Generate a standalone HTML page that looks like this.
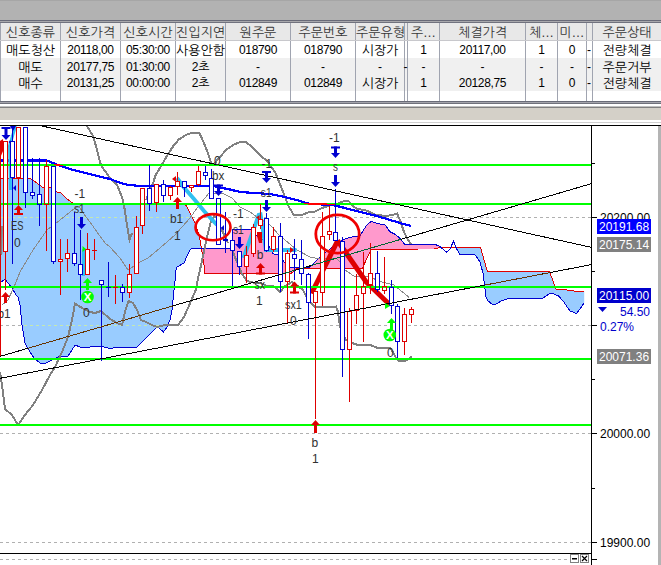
<!DOCTYPE html><html><head><meta charset="utf-8"><title>chart</title><style>
html,body{margin:0;padding:0;background:#fff}
body{width:661px;height:565px;position:relative;overflow:hidden;font-family:"Liberation Sans","NanumGothic","Noto Sans CJK KR",sans-serif;font-size:12px}
.a{position:absolute}
.c{position:absolute;text-align:center;white-space:nowrap;overflow:hidden;line-height:17px;height:17px;color:#000}
.h{color:#383838;line-height:18px;height:18px}
.n{font-size:12px;letter-spacing:-0.35px}
.k{font-size:13px}

</style></head><body>
<div class="a" style="left:0;top:0;width:661px;height:20px;background:#b2b2b2"></div>
<div class="a" style="left:0;top:0;width:661px;height:1px;background:#a6a6a6"></div>
<div class="a" style="left:0;top:20px;width:661px;height:1px;background:#686a78"></div>
<div class="a" style="left:0;top:21px;width:661px;height:1px;background:#a8a8ac"></div>
<div class="a" style="left:0;top:22px;width:661px;height:1px;background:#70727e"></div>
<div class="a" style="left:0;top:23px;width:661px;height:18px;background:#e8e8e8"></div>
<div class="a" style="left:0;top:41px;width:661px;height:60px;background:#fff"></div>
<div class="a" style="left:0;top:58px;width:661px;height:33px;background:#f0f0f0"></div>
<div class="a" style="left:60px;top:23px;width:1px;height:78px;background:#a0a4b0"></div>
<div class="a" style="left:120px;top:23px;width:1px;height:78px;background:#a0a4b0"></div>
<div class="a" style="left:175px;top:23px;width:1px;height:78px;background:#a0a4b0"></div>
<div class="a" style="left:225px;top:23px;width:1px;height:78px;background:#a0a4b0"></div>
<div class="a" style="left:290px;top:23px;width:1px;height:78px;background:#a0a4b0"></div>
<div class="a" style="left:355px;top:23px;width:1px;height:78px;background:#a0a4b0"></div>
<div class="a" style="left:404px;top:23px;width:1px;height:78px;background:#a0a4b0"></div>
<div class="a" style="left:407px;top:23px;width:1px;height:78px;background:#a0a4b0"></div>
<div class="a" style="left:439px;top:23px;width:1px;height:78px;background:#a0a4b0"></div>
<div class="a" style="left:525px;top:23px;width:1px;height:78px;background:#a0a4b0"></div>
<div class="a" style="left:557px;top:23px;width:1px;height:78px;background:#a0a4b0"></div>
<div class="a" style="left:586px;top:23px;width:1px;height:78px;background:#a0a4b0"></div>
<div class="a" style="left:592px;top:23px;width:1px;height:78px;background:#a0a4b0"></div>
<div class="a" style="left:0;top:23px;width:1px;height:78px;background:#a0a4b0"></div>
<div class="a" style="left:0;top:40px;width:661px;height:1px;background:#c8c8cc"></div>
<div class="c h k" style="left:1px;top:23.5px;width:59px">신호종류</div>
<div class="c h k" style="left:61px;top:23.5px;width:59px">신호가격</div>
<div class="c h k" style="left:121px;top:23.5px;width:54px">신호시간</div>
<div class="c h k" style="left:176px;top:23.5px;width:49px">진입지연</div>
<div class="c h k" style="left:226px;top:23.5px;width:64px">원주문</div>
<div class="c h k" style="left:291px;top:23.5px;width:64px">주문번호</div>
<div class="c h k" style="left:356px;top:23.5px;width:48px">주문유형</div>
<div class="c h k" style="left:408px;top:23.5px;width:31px">주…</div>
<div class="c h k" style="left:440px;top:23.5px;width:85px">체결가격</div>
<div class="c h k" style="left:526px;top:23.5px;width:31px">체…</div>
<div class="c h k" style="left:558px;top:23.5px;width:28px">미…</div>
<div class="c h k" style="left:593px;top:23.5px;width:68px">주문상태</div>
<div class="c k" style="left:1px;top:42.0px;width:59px">매도청산</div>
<div class="c n" style="left:61px;top:42.0px;width:59px">20118,00</div>
<div class="c n" style="left:121px;top:42.0px;width:54px">05:30:00</div>
<div class="c k" style="left:176px;top:42.0px;width:49px">사용안함</div>
<div class="c n" style="left:226px;top:42.0px;width:64px">018790</div>
<div class="c n" style="left:291px;top:42.0px;width:64px">018790</div>
<div class="c k" style="left:356px;top:42.0px;width:48px">시장가</div>
<div class="c n" style="left:408px;top:42.0px;width:31px">1</div>
<div class="c n" style="left:440px;top:42.0px;width:85px">20117,00</div>
<div class="c n" style="left:526px;top:42.0px;width:31px">1</div>
<div class="c n" style="left:558px;top:42.0px;width:28px">0</div>
<div class="c" style="left:583px;top:42.0px;width:12px">-</div>
<div class="c k" style="left:593px;top:42.0px;width:68px">전량체결</div>
<div class="c k" style="left:1px;top:58.6px;width:59px">매도</div>
<div class="c n" style="left:61px;top:58.6px;width:59px">20177,75</div>
<div class="c n" style="left:121px;top:58.6px;width:54px">01:30:00</div>
<div class="c n" style="left:176px;top:58.6px;width:49px">2초</div>
<div class="c" style="left:226px;top:58.6px;width:64px">-</div>
<div class="c" style="left:291px;top:58.6px;width:64px">-</div>
<div class="c" style="left:356px;top:58.6px;width:48px">-</div>
<div class="c" style="left:401px;top:58.6px;width:9px">-</div>
<div class="c" style="left:408px;top:58.6px;width:31px">-</div>
<div class="c" style="left:440px;top:58.6px;width:85px">-</div>
<div class="c" style="left:526px;top:58.6px;width:31px">-</div>
<div class="c" style="left:558px;top:58.6px;width:28px">-</div>
<div class="c" style="left:583px;top:58.6px;width:12px">-</div>
<div class="c k" style="left:593px;top:58.6px;width:68px">주문거부</div>
<div class="c k" style="left:1px;top:75.2px;width:59px">매수</div>
<div class="c n" style="left:61px;top:75.2px;width:59px">20131,25</div>
<div class="c n" style="left:121px;top:75.2px;width:54px">00:00:00</div>
<div class="c n" style="left:176px;top:75.2px;width:49px">2초</div>
<div class="c n" style="left:226px;top:75.2px;width:64px">012849</div>
<div class="c n" style="left:291px;top:75.2px;width:64px">012849</div>
<div class="c k" style="left:356px;top:75.2px;width:48px">시장가</div>
<div class="c n" style="left:408px;top:75.2px;width:31px">1</div>
<div class="c n" style="left:440px;top:75.2px;width:85px">20128,75</div>
<div class="c n" style="left:526px;top:75.2px;width:31px">1</div>
<div class="c n" style="left:558px;top:75.2px;width:28px">0</div>
<div class="c" style="left:583px;top:75.2px;width:12px">-</div>
<div class="c k" style="left:593px;top:75.2px;width:68px">전량체결</div>
<div class="a" style="left:0;top:101px;width:661px;height:1px;background:#696b78"></div>
<div class="a" style="left:0;top:102px;width:661px;height:1px;background:#a4a4ac"></div>
<div class="a" style="left:0;top:103px;width:661px;height:1px;background:#70727c"></div>
<div class="a" style="left:0;top:104px;width:661px;height:1px;background:#fff"></div>
<div class="a" style="left:0;top:105px;width:661px;height:1px;background:#fff"></div>
<div class="a" style="left:0;top:106px;width:661px;height:1px;background:#c0c0c0"></div>
<div class="a" style="left:0;top:107px;width:661px;height:1px;background:#808080"></div>
<div class="a" style="left:0;top:108px;width:661px;height:12px;background:#d4d0c8"></div>
<div class="a" style="left:0;top:120px;width:661px;height:5px;background:#fff"></div>
<div class="a" style="left:0;top:122px;width:661px;height:1px;background:#d0d0d0"></div>
<svg width="661" height="565" viewBox="0 0 661 565" style="position:absolute;left:0;top:0;font-kerning:none" font-family="'Liberation Sans',sans-serif">
<defs><clipPath id="plot"><rect x="0" y="126" width="591" height="427"/></clipPath>
<clipPath id="cl1"><polygon points="0,178.5 30,178.5 37,183 42,187 53,188 57,192 60,192 66,198 73,203.5 185,203.5 191,215 196,225 200,240 201.5,248.5 192,248.5 190,250 187,256 184,263 177,267 176,270 174.5,287 174,290 173,300 172,310 170,320 167,327 163.5,332 158,327 156,328 150,334 143,341 137,347 125,347 118,347 110,348.5 100,346 90,347 80,347 75,345 72,350 68,356 58,357 52,360 46,363 40,363 34,358 30,352 25,343 22,325 20,305 18,297 16,295 12,288 8,283 5,279 0,283"/><polygon points="456.2,247.5 480.5,247.5 487.3,271.3 549.4,271.3 556.2,289.5 567,290 575.2,291.2 584.2,291.2 584.2,302.6 580.7,308 576.6,313.5 569.8,310.8 564.3,302.6 559,296.3 553.4,293.6 549.4,293.6 542.5,298.5 508.5,298.5 501.7,300.7 496.3,304 492,304 488,301 486,297 483.2,274 480,261.8 474.5,254 459.5,254 456.2,248"/></clipPath>
<clipPath id="gl"><rect x="0" y="164" width="591" height="2"/><rect x="0" y="203" width="591" height="2"/><rect x="0" y="286" width="591" height="2"/><rect x="0" y="358" width="591" height="2"/><rect x="0" y="424" width="591" height="2"/></clipPath>
<clipPath id="cl2"><polygon points="201.5,248.5 232,248.5 232,229.5 251,229.5 257,236 264,240 268.6,244.6 270,250 273.5,253.9 278,255 282.5,260 284.5,262.5 290,267.5 299.6,267.5 309.2,267.5 319.7,257.4 336,244 343.6,239.3 351.8,237 359.3,236.6 366.8,225 371.3,221.4 377.6,223.6 385.2,225 390,231.8 395.5,234.5 400.2,238.6 404.3,244 407.6,244.8 436,244.8 440,246.5 440,247.5 434,249 371,249.5 363.4,266 362,268.5 297,268.5 291,273.5 205,273.5 204,265"/></clipPath></defs>
<g clip-path="url(#plot)">
<polygon points="0,178.5 30,178.5 37,183 42,187 53,188 57,192 60,192 66,198 73,203.5 185,203.5 191,215 196,225 200,240 201.5,248.5 192,248.5 190,250 187,256 184,263 177,267 176,270 174.5,287 174,290 173,300 172,310 170,320 167,327 163.5,332 158,327 156,328 150,334 143,341 137,347 125,347 118,347 110,348.5 100,346 90,347 80,347 75,345 72,350 68,356 58,357 52,360 46,363 40,363 34,358 30,352 25,343 22,325 20,305 18,297 16,295 12,288 8,283 5,279 0,283" fill="#99ccff"/>
<polygon points="201.5,248.5 232,248.5 232,229.5 251,229.5 257,236 264,240 268.6,244.6 270,250 273.5,253.9 278,255 282.5,260 284.5,262.5 290,267.5 299.6,267.5 309.2,267.5 319.7,257.4 336,244 343.6,239.3 351.8,237 359.3,236.6 366.8,225 371.3,221.4 377.6,223.6 385.2,225 390,231.8 395.5,234.5 400.2,238.6 404.3,244 407.6,244.8 436,244.8 440,246.5 440,247.5 434,249 371,249.5 363.4,266 362,268.5 297,268.5 291,273.5 205,273.5 204,265" fill="#ff99cc"/>
<polygon points="456.2,247.5 480.5,247.5 487.3,271.3 549.4,271.3 556.2,289.5 567,290 575.2,291.2 584.2,291.2 584.2,302.6 580.7,308 576.6,313.5 569.8,310.8 564.3,302.6 559,296.3 553.4,293.6 549.4,293.6 542.5,298.5 508.5,298.5 501.7,300.7 496.3,304 492,304 488,301 486,297 483.2,274 480,261.8 474.5,254 459.5,254 456.2,248" fill="#99ccff"/>
<line x1="0" y1="217.5" x2="591" y2="217.5" stroke="#b0b0b0" stroke-width="1" stroke-dasharray="3,3"/>
<line x1="0" y1="217.5" x2="591" y2="217.5" stroke="#c4e8b0" stroke-width="1" stroke-dasharray="3,3" clip-path="url(#cl1)"/>
<line x1="0" y1="325.5" x2="591" y2="325.5" stroke="#b0b0b0" stroke-width="1" stroke-dasharray="3,3"/>
<line x1="0" y1="325.5" x2="591" y2="325.5" stroke="#c4e8b0" stroke-width="1" stroke-dasharray="3,3" clip-path="url(#cl1)"/>
<line x1="0" y1="433.5" x2="591" y2="433.5" stroke="#b0b0b0" stroke-width="1" stroke-dasharray="3,3"/>
<line x1="0" y1="433.5" x2="591" y2="433.5" stroke="#c4e8b0" stroke-width="1" stroke-dasharray="3,3" clip-path="url(#cl1)"/>
<line x1="0" y1="542.5" x2="591" y2="542.5" stroke="#b0b0b0" stroke-width="1" stroke-dasharray="3,3"/>
<line x1="0" y1="542.5" x2="591" y2="542.5" stroke="#c4e8b0" stroke-width="1" stroke-dasharray="3,3" clip-path="url(#cl1)"/>
<line x1="0" y1="559.5" x2="591" y2="559.5" stroke="#b0b0b0" stroke-width="1" stroke-dasharray="3,3"/>
<line x1="0" y1="559.5" x2="591" y2="559.5" stroke="#c4e8b0" stroke-width="1" stroke-dasharray="3,3" clip-path="url(#cl1)"/>
<g shape-rendering="crispEdges">
<polyline points="0,178.5 30,178.5 37,183 42,187 53,188 57,192 60,192 66,198 73,203.5" fill="none" stroke="#de0000" stroke-width="1"/>
<polyline points="73,203.5 185,203.5" fill="none" stroke="#0000d0" stroke-width="1"/>
<polyline points="185,203.5 191,215 196,225 200,240 201.5,248.5 204,265 205,273.5 291,273.5 297,268.5 362,268.5 363.4,266 371,249.5 420,249 434,249 440,247.5 480.5,247.5 487.3,271.3 549.4,271.3 556.2,289.5 567,290 575.2,291.2 584.2,291.2" fill="none" stroke="#de0000" stroke-width="1"/>
<polyline points="0,283 5,279 8,283 12,288 16,295 18,297 20,305 22,325 25,343 30,352 34,358 40,363 46,363 52,360 58,357 68,356 72,350 75,345 80,347 90,347 100,346 110,348.5 118,347 125,347 137,347 143,341 150,334 156,328 158,327 163.5,332 167,327 170,320 172,310 173,300 174,290 174.5,287 176,270 177,267 184,263 187,256 190,250 192,248.5 232,248.5 232,229.5 251,229.5 257,236 264,240 268.6,244.6 270,250 273.5,253.9 278,255 282.5,260 284.5,262.5 290,267.5 299.6,267.5 309.2,267.5 319.7,257.4 336,244 343.6,239.3 351.8,237 359.3,236.6 366.8,225 371.3,221.4 377.6,223.6 385.2,225 390,231.8 395.5,234.5 400.2,238.6 404.3,244 407.6,244.8 436,244.8 440,246.5 446.4,252.2 450,249 453.5,241.3 456.2,248 459.5,254 474.5,254 480,261.8 483.2,274 486,297 488,301 492,304 496.3,304 501.7,300.7 508.5,298.5 542.5,298.5 549.4,293.6 553.4,293.6 559,296.3 564.3,302.6 569.8,310.8 576.6,313.5 580.7,308 584.2,302.6" fill="none" stroke="#0000d0" stroke-width="1"/>
</g>
<polyline points="87,126 93,136 96,146 101,165.4 110,178 117,185 122,197 124,205 127,225 129.5,240 132,233" fill="none" stroke="#808080" stroke-width="2" shape-rendering="crispEdges"/>
<polyline points="146,200 150,190 152.9,183.9 155.4,175.5 160.5,167.1 167.2,155.3 173.9,145.2 179,139.3 185.7,135.1 192.4,132.6 199.2,132.6 203.4,141.9 207.6,152 210.9,162 213,165" fill="none" stroke="#808080" stroke-width="2" shape-rendering="crispEdges"/>
<polyline points="213,165 220,157 226,150 233,145 240,142 246,142 252,147 260,155 268,162 275,172 280,184 285,197 289,207 293.5,214.5 303,214.5 309,212 315,211.5 322,208 330,205.5 335,205 340,202.5 345,201 349,201.5 353,206 357,209 365,210 375,214.5 385,216 393,215 397,213.5 400,220 404,232 408,240 411,244" fill="none" stroke="#808080" stroke-width="2" shape-rendering="crispEdges"/>
<polyline points="0,225 1,255" fill="none" stroke="#808080" stroke-width="2" shape-rendering="crispEdges"/>
<polyline points="0,372 2,385 5,409 12,415 18,425 25,415 33,405 42,390 50,375 55,367 62,352 68,337 72,320 75,303.5 82,308 90,312 95,313 101,311 110,319 117,323 122,325 125,312 128.5,301 133,303 137,310 141,320 146,322 152,325 157,327 165,325 178,325 184,317 190.7,301.8 195.8,290 197.5,280.7 201.7,262.2 206.7,238.6 210.9,221.8 214,216 217,218 220,226 228,243" fill="none" stroke="#808080" stroke-width="2" shape-rendering="crispEdges"/>
<polyline points="232,250 237,262 242,274 247,281 255,283 262,283.5 266,285.5 273,285.5 280,292 285,286 292,282 299,287 303,290 306,296 310,302 315,307 322,307.5 336,306.5 338,312 340,326 343,335 346,340 352,343 358,345 370,345 378,348 390,348 393,352 396,358 399,361 405,361 410,358 412,356.5" fill="none" stroke="#808080" stroke-width="2" shape-rendering="crispEdges"/>
<polyline points="2,305 8,300 14,287 20,272 33,250 47,230 60,220 75,208 79,206 83,213 90,222 97,232 105,243 110,247 120,258 128,270 140,262 148,258 160,248 175,235 190,218 197,208 209,193 222,193 232,198 240,207 250,212 257,217 270,225 280,236 285,240 297,250 310,257 320,259 336,258 340,262 345,270 355,276.8 370,277 380.5,281.6 394,285 409,297.3" fill="none" stroke="#8a8a8a" stroke-width="1" shape-rendering="crispEdges"/>
<polyline points="0,160.5 47,160.5 58,165 75,170.5 110,179 118,182 126,184.5 140,186 213,186 220,187.5 230,189.5 240,192 255,193 270,194 285,197 300,201 308,203.5" fill="none" stroke="#0000ff" stroke-width="2.2" shape-rendering="crispEdges"/>
<polyline points="308,203.5 318,204.3 330,204.7 335,205.5 345,208 360,212 375,215.5 390,220 400,223 411,226" fill="none" stroke="#0000ff" stroke-width="2.2" shape-rendering="crispEdges"/>
<polyline points="177,178 184,187.5 194,199 204,211 217,225" fill="none" stroke="#30c0f0" stroke-width="4"/>
<polyline points="243.5,258 258.7,215 260.5,214.5 266,250 296.5,250" fill="none" stroke="#30c0f0" stroke-width="4"/>
<polyline points="83.5,249 83.5,276" fill="none" stroke="#30c0f0" stroke-width="3"/>
<polyline points="15.5,126 9.5,146 10.5,190" fill="none" stroke="#30c0f0" stroke-width="3"/>
<polygon points="0,141 3,139 3.5,150 0,158" fill="#de0000"/>
<polyline points="311.5,293.5 337.5,241" fill="none" stroke="#de0000" stroke-width="5"/>
<polyline points="337.5,240.5 366.2,282 389.5,304.5" fill="none" stroke="#de0000" stroke-width="5" stroke-linejoin="round"/>
<rect x="-4" y="150" width="5" height="206" fill="#fff"/>
<rect x="3" y="141" width="5" height="111" fill="#fff"/>
<rect x="10" y="141" width="5" height="37" fill="#fff"/>
<rect x="16" y="127" width="5" height="51" fill="#fff"/>
<rect x="23" y="127" width="5" height="66" fill="#fff"/>
<rect x="30" y="192" width="5" height="4" fill="#fff"/>
<rect x="37" y="194" width="5" height="11" fill="#fff"/>
<rect x="44" y="166" width="5" height="39" fill="#fff"/>
<rect x="51" y="166" width="5" height="96" fill="#fff"/>
<rect x="58" y="259" width="5" height="3" fill="#fff"/>
<rect x="65" y="253" width="5" height="6" fill="#fff"/>
<rect x="72" y="253" width="5" height="11" fill="#fff"/>
<rect x="78" y="264" width="5" height="11" fill="#fff"/>
<rect x="85" y="249" width="5" height="26" fill="#fff"/>
<rect x="99" y="280" width="5" height="5" fill="#fff"/>
<rect x="120" y="287" width="5" height="6" fill="#fff"/>
<rect x="127" y="274" width="5" height="19" fill="#fff"/>
<rect x="134" y="227" width="5" height="47" fill="#fff"/>
<rect x="140" y="188" width="5" height="38" fill="#fff"/>
<rect x="147" y="188" width="5" height="16" fill="#fff"/>
<rect x="154" y="184" width="5" height="19" fill="#fff"/>
<rect x="161" y="184" width="5" height="12" fill="#fff"/>
<rect x="168" y="187" width="5" height="9" fill="#fff"/>
<rect x="175" y="181" width="5" height="6" fill="#fff"/>
<rect x="182" y="181" width="5" height="7" fill="#fff"/>
<rect x="189" y="185" width="5" height="3" fill="#fff"/>
<rect x="196" y="171" width="5" height="14" fill="#fff"/>
<rect x="203" y="172" width="5" height="4" fill="#fff"/>
<rect x="209" y="178" width="5" height="21" fill="#fff"/>
<rect x="216" y="198" width="5" height="47" fill="#fff"/>
<rect x="223" y="239" width="5" height="2" fill="#fff"/>
<rect x="230" y="240" width="5" height="11" fill="#fff"/>
<rect x="237" y="251" width="5" height="16" fill="#fff"/>
<rect x="244" y="255" width="5" height="12" fill="#fff"/>
<rect x="251" y="227" width="5" height="27" fill="#fff"/>
<rect x="258" y="219" width="5" height="7" fill="#fff"/>
<rect x="264" y="218" width="5" height="33" fill="#fff"/>
<rect x="271" y="236" width="5" height="14" fill="#fff"/>
<rect x="278" y="236" width="5" height="46" fill="#fff"/>
<rect x="285" y="253" width="5" height="29" fill="#fff"/>
<rect x="292" y="254" width="5" height="5" fill="#fff"/>
<rect x="299" y="259" width="5" height="15" fill="#fff"/>
<rect x="306" y="274" width="5" height="29" fill="#fff"/>
<rect x="313" y="291" width="5" height="12" fill="#fff"/>
<rect x="320" y="236" width="5" height="57" fill="#fff"/>
<rect x="327" y="231" width="5" height="4" fill="#fff"/>
<rect x="333" y="232" width="5" height="9" fill="#fff"/>
<rect x="340" y="241" width="5" height="109" fill="#fff"/>
<rect x="347" y="311" width="5" height="39" fill="#fff"/>
<rect x="354" y="295" width="5" height="16" fill="#fff"/>
<rect x="361" y="286" width="5" height="8" fill="#fff"/>
<rect x="368" y="273" width="5" height="12" fill="#fff"/>
<rect x="375" y="273" width="5" height="17" fill="#fff"/>
<rect x="382" y="286" width="5" height="5" fill="#fff"/>
<rect x="389" y="287" width="5" height="19" fill="#fff"/>
<rect x="395" y="306" width="5" height="36" fill="#fff"/>
<rect x="402" y="314" width="5" height="28" fill="#fff"/>
<rect x="409" y="309" width="5" height="6" fill="#fff"/>
<rect x="0" y="164" width="591" height="2" fill="#00ff00"/>
<rect x="0" y="203" width="591" height="2" fill="#00ff00"/>
<rect x="0" y="286" width="591" height="2" fill="#00ff00"/>
<rect x="0" y="358" width="591" height="2" fill="#00ff00"/>
<rect x="0" y="424" width="591" height="2" fill="#00ff00"/>
<g clip-path="url(#gl)">
<polyline points="0,160.5 47,160.5 58,165 75,170.5 110,179 118,182 126,184.5 140,186 213,186 220,187.5 230,189.5 240,192 255,193 270,194 285,197 300,201 308,203.5 318,204.3 330,204.7 335,205.5 345,208 360,212 375,215.5 390,220 400,223 411,226" fill="none" stroke="#ff0000" stroke-width="2.2" shape-rendering="crispEdges"/>
</g>
<rect x="-3.5" y="150.5" width="4" height="205" fill="none" stroke="#de0000" stroke-width="1"/>
<rect x="5" y="252" width="1" height="38" fill="#de0000"/>
<rect x="3.5" y="141.5" width="4" height="110" fill="none" stroke="#de0000" stroke-width="1"/>
<rect x="12" y="126" width="1" height="15" fill="#0000d0"/>
<rect x="12" y="178" width="1" height="86" fill="#0000d0"/>
<rect x="10.5" y="141.5" width="4" height="36" fill="none" stroke="#0000d0" stroke-width="1"/>
<rect x="18" y="178" width="1" height="27" fill="#de0000"/>
<rect x="16.5" y="127.5" width="4" height="50" fill="none" stroke="#de0000" stroke-width="1"/>
<rect x="25" y="193" width="1" height="15" fill="#0000d0"/>
<rect x="23.5" y="127.5" width="4" height="65" fill="none" stroke="#0000d0" stroke-width="1"/>
<rect x="32" y="158" width="1" height="34" fill="#0000d0"/>
<rect x="32" y="196" width="1" height="3" fill="#0000d0"/>
<rect x="30.5" y="192.5" width="4" height="3" fill="none" stroke="#0000d0" stroke-width="1"/>
<rect x="39" y="158" width="1" height="36" fill="#0000d0"/>
<rect x="39" y="205" width="1" height="21" fill="#0000d0"/>
<rect x="37.5" y="194.5" width="4" height="10" fill="none" stroke="#0000d0" stroke-width="1"/>
<rect x="46" y="160" width="1" height="6" fill="#de0000"/>
<rect x="46" y="205" width="1" height="46" fill="#de0000"/>
<rect x="44.5" y="166.5" width="4" height="38" fill="none" stroke="#de0000" stroke-width="1"/>
<rect x="53" y="262" width="1" height="2" fill="#0000d0"/>
<rect x="51.5" y="166.5" width="4" height="95" fill="none" stroke="#0000d0" stroke-width="1"/>
<rect x="60" y="239" width="1" height="20" fill="#de0000"/>
<rect x="60" y="262" width="1" height="33" fill="#de0000"/>
<rect x="58.5" y="259.5" width="4" height="2" fill="none" stroke="#de0000" stroke-width="1"/>
<rect x="67" y="239" width="1" height="14" fill="#de0000"/>
<rect x="67" y="259" width="1" height="13" fill="#de0000"/>
<rect x="65.5" y="253.5" width="4" height="5" fill="none" stroke="#de0000" stroke-width="1"/>
<rect x="74" y="212" width="1" height="41" fill="#0000d0"/>
<rect x="74" y="264" width="1" height="2" fill="#0000d0"/>
<rect x="72.5" y="253.5" width="4" height="10" fill="none" stroke="#0000d0" stroke-width="1"/>
<rect x="80" y="230" width="1" height="34" fill="#0000d0"/>
<rect x="80" y="275" width="1" height="25" fill="#0000d0"/>
<rect x="78.5" y="264.5" width="4" height="10" fill="none" stroke="#0000d0" stroke-width="1"/>
<rect x="87" y="233" width="1" height="16" fill="#de0000"/>
<rect x="85.5" y="249.5" width="4" height="25" fill="none" stroke="#de0000" stroke-width="1"/>
<rect x="94" y="239" width="1" height="21" fill="#de0000"/>
<rect x="92" y="250" width="5" height="1" fill="#de0000"/>
<rect x="101" y="285" width="1" height="76" fill="#0000d0"/>
<rect x="99.5" y="280.5" width="4" height="4" fill="none" stroke="#0000d0" stroke-width="1"/>
<rect x="108" y="262" width="1" height="35" fill="#0000d0"/>
<rect x="106" y="287" width="5" height="1" fill="#0000d0"/>
<rect x="115" y="275" width="1" height="29" fill="#de0000"/>
<rect x="113" y="287" width="5" height="1" fill="#de0000"/>
<rect x="122" y="284" width="1" height="3" fill="#0000d0"/>
<rect x="122" y="293" width="1" height="9" fill="#0000d0"/>
<rect x="120.5" y="287.5" width="4" height="5" fill="none" stroke="#0000d0" stroke-width="1"/>
<rect x="129" y="264" width="1" height="10" fill="#de0000"/>
<rect x="129" y="293" width="1" height="5" fill="#de0000"/>
<rect x="127.5" y="274.5" width="4" height="18" fill="none" stroke="#de0000" stroke-width="1"/>
<rect x="136" y="216" width="1" height="11" fill="#de0000"/>
<rect x="134.5" y="227.5" width="4" height="46" fill="none" stroke="#de0000" stroke-width="1"/>
<rect x="142" y="226" width="1" height="8" fill="#de0000"/>
<rect x="140.5" y="188.5" width="4" height="37" fill="none" stroke="#de0000" stroke-width="1"/>
<rect x="149" y="165" width="1" height="23" fill="#0000d0"/>
<rect x="149" y="204" width="1" height="7" fill="#0000d0"/>
<rect x="147.5" y="188.5" width="4" height="15" fill="none" stroke="#0000d0" stroke-width="1"/>
<rect x="156" y="203" width="1" height="9" fill="#de0000"/>
<rect x="154.5" y="184.5" width="4" height="18" fill="none" stroke="#de0000" stroke-width="1"/>
<rect x="163" y="180" width="1" height="4" fill="#0000d0"/>
<rect x="163" y="196" width="1" height="6" fill="#0000d0"/>
<rect x="161.5" y="184.5" width="4" height="11" fill="none" stroke="#0000d0" stroke-width="1"/>
<rect x="170" y="186" width="1" height="1" fill="#de0000"/>
<rect x="170" y="196" width="1" height="4" fill="#de0000"/>
<rect x="168.5" y="187.5" width="4" height="8" fill="none" stroke="#de0000" stroke-width="1"/>
<rect x="177" y="172" width="1" height="9" fill="#de0000"/>
<rect x="177" y="187" width="1" height="8" fill="#de0000"/>
<rect x="175.5" y="181.5" width="4" height="5" fill="none" stroke="#de0000" stroke-width="1"/>
<rect x="184" y="188" width="1" height="9" fill="#0000d0"/>
<rect x="182.5" y="181.5" width="4" height="6" fill="none" stroke="#0000d0" stroke-width="1"/>
<rect x="191" y="188" width="1" height="4" fill="#de0000"/>
<rect x="189.5" y="185.5" width="4" height="2" fill="none" stroke="#de0000" stroke-width="1"/>
<rect x="198" y="166" width="1" height="5" fill="#de0000"/>
<rect x="198" y="185" width="1" height="1" fill="#de0000"/>
<rect x="196.5" y="171.5" width="4" height="13" fill="none" stroke="#de0000" stroke-width="1"/>
<rect x="205" y="166" width="1" height="6" fill="#0000d0"/>
<rect x="205" y="176" width="1" height="4" fill="#0000d0"/>
<rect x="203.5" y="172.5" width="4" height="3" fill="none" stroke="#0000d0" stroke-width="1"/>
<rect x="211" y="169" width="1" height="9" fill="#0000d0"/>
<rect x="209.5" y="178.5" width="4" height="20" fill="none" stroke="#0000d0" stroke-width="1"/>
<rect x="216.5" y="198.5" width="4" height="46" fill="none" stroke="#0000d0" stroke-width="1"/>
<rect x="225" y="212" width="1" height="27" fill="#0000d0"/>
<rect x="225" y="241" width="1" height="12" fill="#0000d0"/>
<rect x="223.5" y="239.5" width="4" height="1" fill="none" stroke="#0000d0" stroke-width="1"/>
<rect x="232" y="251" width="1" height="35" fill="#0000d0"/>
<rect x="230.5" y="240.5" width="4" height="10" fill="none" stroke="#0000d0" stroke-width="1"/>
<rect x="239" y="267" width="1" height="8" fill="#0000d0"/>
<rect x="237.5" y="251.5" width="4" height="15" fill="none" stroke="#0000d0" stroke-width="1"/>
<rect x="246" y="246" width="1" height="9" fill="#de0000"/>
<rect x="246" y="267" width="1" height="16" fill="#de0000"/>
<rect x="244.5" y="255.5" width="4" height="11" fill="none" stroke="#de0000" stroke-width="1"/>
<rect x="253" y="224" width="1" height="3" fill="#de0000"/>
<rect x="253" y="254" width="1" height="3" fill="#de0000"/>
<rect x="251.5" y="227.5" width="4" height="26" fill="none" stroke="#de0000" stroke-width="1"/>
<rect x="260" y="204" width="1" height="15" fill="#de0000"/>
<rect x="260" y="226" width="1" height="3" fill="#de0000"/>
<rect x="258.5" y="219.5" width="4" height="6" fill="none" stroke="#de0000" stroke-width="1"/>
<rect x="266" y="213" width="1" height="5" fill="#0000d0"/>
<rect x="266" y="251" width="1" height="1" fill="#0000d0"/>
<rect x="264.5" y="218.5" width="4" height="32" fill="none" stroke="#0000d0" stroke-width="1"/>
<rect x="273" y="227" width="1" height="9" fill="#de0000"/>
<rect x="273" y="250" width="1" height="2" fill="#de0000"/>
<rect x="271.5" y="236.5" width="4" height="13" fill="none" stroke="#de0000" stroke-width="1"/>
<rect x="280" y="223" width="1" height="13" fill="#0000d0"/>
<rect x="280" y="282" width="1" height="10" fill="#0000d0"/>
<rect x="278.5" y="236.5" width="4" height="45" fill="none" stroke="#0000d0" stroke-width="1"/>
<rect x="287" y="250" width="1" height="3" fill="#de0000"/>
<rect x="287" y="282" width="1" height="41" fill="#de0000"/>
<rect x="285.5" y="253.5" width="4" height="28" fill="none" stroke="#de0000" stroke-width="1"/>
<rect x="294" y="239" width="1" height="15" fill="#0000d0"/>
<rect x="294" y="259" width="1" height="21" fill="#0000d0"/>
<rect x="292.5" y="254.5" width="4" height="4" fill="none" stroke="#0000d0" stroke-width="1"/>
<rect x="301" y="240" width="1" height="19" fill="#0000d0"/>
<rect x="301" y="274" width="1" height="11" fill="#0000d0"/>
<rect x="299.5" y="259.5" width="4" height="14" fill="none" stroke="#0000d0" stroke-width="1"/>
<rect x="308" y="273" width="1" height="1" fill="#0000d0"/>
<rect x="308" y="303" width="1" height="36" fill="#0000d0"/>
<rect x="306.5" y="274.5" width="4" height="28" fill="none" stroke="#0000d0" stroke-width="1"/>
<rect x="315" y="303" width="1" height="116" fill="#de0000"/>
<rect x="313.5" y="291.5" width="4" height="11" fill="none" stroke="#de0000" stroke-width="1"/>
<rect x="322" y="212" width="1" height="24" fill="#de0000"/>
<rect x="322" y="293" width="1" height="13" fill="#de0000"/>
<rect x="320.5" y="236.5" width="4" height="56" fill="none" stroke="#de0000" stroke-width="1"/>
<rect x="329" y="206" width="1" height="25" fill="#de0000"/>
<rect x="329" y="235" width="1" height="5" fill="#de0000"/>
<rect x="327.5" y="231.5" width="4" height="3" fill="none" stroke="#de0000" stroke-width="1"/>
<rect x="335" y="189" width="1" height="43" fill="#0000d0"/>
<rect x="333.5" y="232.5" width="4" height="8" fill="none" stroke="#0000d0" stroke-width="1"/>
<rect x="342" y="237" width="1" height="4" fill="#0000d0"/>
<rect x="342" y="350" width="1" height="27" fill="#0000d0"/>
<rect x="340.5" y="241.5" width="4" height="108" fill="none" stroke="#0000d0" stroke-width="1"/>
<rect x="349" y="308" width="1" height="3" fill="#de0000"/>
<rect x="349" y="350" width="1" height="52" fill="#de0000"/>
<rect x="347.5" y="311.5" width="4" height="38" fill="none" stroke="#de0000" stroke-width="1"/>
<rect x="356" y="274" width="1" height="21" fill="#de0000"/>
<rect x="356" y="311" width="1" height="13" fill="#de0000"/>
<rect x="354.5" y="295.5" width="4" height="15" fill="none" stroke="#de0000" stroke-width="1"/>
<rect x="363" y="252" width="1" height="34" fill="#de0000"/>
<rect x="363" y="294" width="1" height="48" fill="#de0000"/>
<rect x="361.5" y="286.5" width="4" height="7" fill="none" stroke="#de0000" stroke-width="1"/>
<rect x="370" y="243" width="1" height="30" fill="#de0000"/>
<rect x="370" y="285" width="1" height="9" fill="#de0000"/>
<rect x="368.5" y="273.5" width="4" height="11" fill="none" stroke="#de0000" stroke-width="1"/>
<rect x="377" y="251" width="1" height="22" fill="#0000d0"/>
<rect x="377" y="290" width="1" height="2" fill="#0000d0"/>
<rect x="375.5" y="273.5" width="4" height="16" fill="none" stroke="#0000d0" stroke-width="1"/>
<rect x="384" y="257" width="1" height="29" fill="#de0000"/>
<rect x="384" y="291" width="1" height="3" fill="#de0000"/>
<rect x="382.5" y="286.5" width="4" height="4" fill="none" stroke="#de0000" stroke-width="1"/>
<rect x="391" y="280" width="1" height="7" fill="#0000d0"/>
<rect x="391" y="306" width="1" height="8" fill="#0000d0"/>
<rect x="389.5" y="287.5" width="4" height="18" fill="none" stroke="#0000d0" stroke-width="1"/>
<rect x="397" y="304" width="1" height="2" fill="#0000d0"/>
<rect x="397" y="342" width="1" height="16" fill="#0000d0"/>
<rect x="395.5" y="306.5" width="4" height="35" fill="none" stroke="#0000d0" stroke-width="1"/>
<rect x="404" y="308" width="1" height="6" fill="#de0000"/>
<rect x="404" y="342" width="1" height="13" fill="#de0000"/>
<rect x="402.5" y="314.5" width="4" height="27" fill="none" stroke="#de0000" stroke-width="1"/>
<rect x="411" y="307" width="1" height="2" fill="#de0000"/>
<rect x="411" y="315" width="1" height="8" fill="#de0000"/>
<rect x="409.5" y="309.5" width="4" height="5" fill="none" stroke="#de0000" stroke-width="1"/>
<line x1="2" y1="226" x2="1.4" y2="254" stroke="#808080" stroke-width="1.8"/>
<g shape-rendering="crispEdges"><line x1="42" y1="126" x2="592" y2="247.5" stroke="#000" stroke-width="1"/><line x1="0" y1="356.4" x2="592" y2="183.5" stroke="#000" stroke-width="1"/><line x1="0" y1="378.3" x2="592" y2="264.5" stroke="#000" stroke-width="1"/></g>
<g shape-rendering="crispEdges" clip-path="url(#cl1)"><line x1="42" y1="126" x2="592" y2="247.5" stroke="#663300" stroke-width="1"/><line x1="0" y1="356.4" x2="592" y2="183.5" stroke="#663300" stroke-width="1"/><line x1="0" y1="378.3" x2="592" y2="264.5" stroke="#663300" stroke-width="1"/></g>
<g shape-rendering="crispEdges" clip-path="url(#cl2)"><line x1="42" y1="126" x2="592" y2="247.5" stroke="#006633" stroke-width="1"/><line x1="0" y1="356.4" x2="592" y2="183.5" stroke="#006633" stroke-width="1"/><line x1="0" y1="378.3" x2="592" y2="264.5" stroke="#006633" stroke-width="1"/></g>
<ellipse cx="213" cy="227.2" rx="17.5" ry="13.1" fill="none" stroke="#f00000" stroke-width="2.6"/>
<ellipse cx="337.5" cy="234" rx="21.7" ry="19.2" fill="none" stroke="#f00000" stroke-width="2.8"/>
<rect x="4.5" y="127" width="3" height="8" fill="#0000d0"/><polygon points="1.5,135 10.5,135 6,140" fill="#0000d0"/><rect x="1.5" y="127" width="9" height="2" fill="#0000d0"/>
<rect x="17.0" y="210" width="3" height="5" fill="#de0000"/><polygon points="14.0,210 23.0,210 18.5,205" fill="#de0000"/><rect x="14.0" y="213" width="9" height="2" fill="#de0000"/>
<rect x="80.0" y="217" width="3" height="7" fill="#0000d0"/><polygon points="77.0,224 86.0,224 81.5,229" fill="#0000d0"/>
<rect x="4.0" y="297" width="3" height="6" fill="#de0000"/><polygon points="1.0,297 10.0,297 5.5,292" fill="#de0000"/>
<rect x="176.0" y="202" width="3" height="7" fill="#de0000"/><polygon points="173.0,202 182.0,202 177.5,197" fill="#de0000"/>
<rect x="217.0" y="184.5" width="3" height="6.5" fill="#0000d0"/><polygon points="214.0,191 223.0,191 218.5,196" fill="#0000d0"/><rect x="214.0" y="184.5" width="9" height="2" fill="#0000d0"/>
<rect x="265.0" y="171" width="3" height="7" fill="#0000d0"/><polygon points="262.0,178 271.0,178 266.5,183" fill="#0000d0"/><rect x="262.0" y="171" width="9" height="2" fill="#0000d0"/>
<rect x="265.0" y="200" width="3" height="7" fill="#0000d0"/><polygon points="262.0,207 271.0,207 266.5,212" fill="#0000d0"/>
<rect x="238.0" y="237" width="3" height="7" fill="#0000d0"/><polygon points="235.0,244 244.0,244 239.5,249" fill="#0000d0"/>
<rect x="259.0" y="268" width="3" height="6.5" fill="#de0000"/><polygon points="256.0,268 265.0,268 260.5,263" fill="#de0000"/><rect x="256.0" y="272.5" width="9" height="2" fill="#de0000"/>
<rect x="293.0" y="286.5" width="3" height="7.0" fill="#de0000"/><polygon points="290.0,286.5 299.0,286.5 294.5,281.5" fill="#de0000"/><rect x="290.0" y="291.5" width="9" height="2" fill="#de0000"/>
<rect x="334.0" y="146.5" width="3" height="6.5" fill="#0000d0"/><polygon points="331.0,153 340.0,153 335.5,158" fill="#0000d0"/><rect x="331.0" y="146.5" width="9" height="2" fill="#0000d0"/>
<rect x="334.0" y="175" width="3" height="7" fill="#0000d0"/><polygon points="331.0,182 340.0,182 335.5,187" fill="#0000d0"/>
<rect x="314.0" y="425" width="3" height="8" fill="#de0000"/><polygon points="311.0,425 320.0,425 315.5,420" fill="#de0000"/>
<rect x="86.0" y="283" width="3" height="7" fill="#00ff00"/><polygon points="83.0,283 92.0,283 87.5,278" fill="#00ff00"/>
<circle cx="87.5" cy="297" r="6.3" fill="#00ff00"/>
<text x="87.5" y="301.2" font-size="11.5" fill="#fff" text-anchor="middle" font-weight="bold">X</text>
<rect x="390.0" y="323" width="3" height="7" fill="#00ff00"/><polygon points="387.0,323 396.0,323 391.5,318" fill="#00ff00"/>
<circle cx="389.8" cy="335" r="6.3" fill="#00ff00"/>
<text x="389.8" y="339.2" font-size="11.5" fill="#fff" text-anchor="middle" font-weight="bold">X</text>
<polygon points="172,176 176,179 172,182" fill="#de0000" transform="rotate(180 174 179)"/>
<polygon points="290,247 294,250 290,253" fill="#de0000"/>
<polygon points="259.5,215 256,217.5 259.5,220" fill="#de0000"/>
<polygon points="385,303 390,306 385,309" fill="#00ff00"/>
<polygon points="82.5,246 86,249 82.5,252" fill="#00ff00"/>
<polygon points="224,225 221,228 224,231" fill="#0000d0"/>
<polygon points="10.5,140 8.5,142 10.5,144" fill="#0000d0"/>
<polygon points="10,126 16,126 13,131" fill="#0000d0"/>
<polygon points="16,185 13,188 16,191" fill="#0000d0"/>
<polygon points="257,232 262,232 262,243 259,243 257,236" fill="#de0000"/>
<text x="74.5" y="198" font-size="12" fill="#303030" text-anchor="start">-1</text>
<text x="74" y="213" font-size="12" fill="#303030" text-anchor="start" textLength="10.8" lengthAdjust="spacingAndGlyphs">s1</text>
<text x="11" y="230" font-size="12" fill="#303030" text-anchor="start" textLength="12.4" lengthAdjust="spacingAndGlyphs">ES</text>
<text x="14" y="247" font-size="12" fill="#303030" text-anchor="start">0</text>
<text x="-2.5" y="318" font-size="12" fill="#303030" text-anchor="start" textLength="13.2" lengthAdjust="spacingAndGlyphs">b1</text>
<text x="83" y="317" font-size="12" fill="#303030" text-anchor="start">0</text>
<text x="170" y="223" font-size="12" fill="#303030" text-anchor="start" textLength="13.2" lengthAdjust="spacingAndGlyphs">b1</text>
<text x="174" y="240" font-size="12" fill="#303030" text-anchor="start">1</text>
<text x="214" y="165" font-size="12" fill="#303030" text-anchor="start">0</text>
<text x="212" y="179.5" font-size="12" fill="#303030" text-anchor="start" textLength="12.3" lengthAdjust="spacingAndGlyphs">bx</text>
<text x="261.5" y="168" font-size="12" fill="#303030" text-anchor="start">-1</text>
<text x="260.8" y="197" font-size="12" fill="#303030" text-anchor="start" textLength="10.8" lengthAdjust="spacingAndGlyphs">s1</text>
<text x="233" y="218" font-size="12" fill="#303030" text-anchor="start">-1</text>
<text x="233" y="233.5" font-size="12" fill="#303030" text-anchor="start" textLength="10.8" lengthAdjust="spacingAndGlyphs">s1</text>
<text x="256.8" y="258.5" font-size="12" fill="#303030" text-anchor="start">b</text>
<text x="254.5" y="289" font-size="12" fill="#303030" text-anchor="start" textLength="10.4" lengthAdjust="spacingAndGlyphs">sx</text>
<text x="256" y="305" font-size="12" fill="#303030" text-anchor="start">1</text>
<text x="285" y="308.5" font-size="12" fill="#303030" text-anchor="start" textLength="16.8" lengthAdjust="spacingAndGlyphs">sx1</text>
<text x="290" y="325" font-size="12" fill="#303030" text-anchor="start">0</text>
<text x="329" y="142" font-size="12" fill="#303030" text-anchor="start">-1</text>
<text x="333" y="171" font-size="12" fill="#303030" text-anchor="start" textLength="4.9" lengthAdjust="spacingAndGlyphs">s</text>
<text x="387" y="356.5" font-size="12" fill="#303030" text-anchor="start">0</text>
<text x="311.5" y="447" font-size="12" fill="#303030" text-anchor="start">b</text>
<text x="312" y="463" font-size="12" fill="#303030" text-anchor="start">1</text>
</g>
<rect x="0" y="125" width="661" height="1" fill="#000"/>
<rect x="591" y="126" width="1" height="439" fill="#000"/>
<rect x="0" y="553" width="591" height="1" fill="#000"/>
<line x1="0" y1="559.5" x2="570" y2="559.5" stroke="#b0b0b0" stroke-width="1" stroke-dasharray="3,3"/>
<rect x="658" y="126" width="3" height="439" fill="#b4b4b4"/>
<rect x="592" y="217" width="5" height="1" fill="#000"/>
<rect x="592" y="325" width="5" height="1" fill="#000"/>
<rect x="592" y="433" width="5" height="1" fill="#000"/>
<rect x="592" y="542" width="5" height="1" fill="#000"/>
<rect x="592" y="559" width="5" height="1" fill="#000"/>
<rect x="592" y="163" width="3" height="1" fill="#000"/>
<rect x="592" y="271" width="3" height="1" fill="#000"/>
<rect x="592" y="379" width="3" height="1" fill="#000"/>
<rect x="592" y="488" width="3" height="1" fill="#000"/>
<text x="600" y="222" font-size="12" fill="#000" text-anchor="start">20200.00</text>
<text x="600" y="438" font-size="12" fill="#000" text-anchor="start">20000.00</text>
<text x="600" y="547" font-size="12" fill="#000" text-anchor="start">19900.00</text>
<rect x="597" y="219" width="54" height="15" fill="#0000ff"/><text x="599" y="231" font-size="12" fill="#fff" text-anchor="start">20191.68</text>
<rect x="597" y="237" width="54" height="15" fill="#808080"/><text x="599" y="249" font-size="12" fill="#fff" text-anchor="start">20175.14</text>
<rect x="597" y="288" width="54" height="15" fill="#0000cc"/><text x="599" y="300" font-size="12" fill="#fff" text-anchor="start">20115.00</text>
<rect x="597" y="349" width="54" height="15" fill="#808080"/><text x="599" y="361" font-size="12" fill="#fff" text-anchor="start">20071.36</text>
<polygon points="598,307 607,307 602.5,312" fill="#0000cc"/>
<text x="650" y="316" font-size="12" fill="#0000cc" text-anchor="end">54.50</text>
<text x="600" y="331" font-size="12" fill="#0000cc" text-anchor="start">0.27%</text>
<rect x="570.5" y="554.5" width="8" height="8" fill="#fff" stroke="#808080"/><rect x="572" y="558" width="5" height="1.5" fill="#000"/>
<rect x="580.5" y="554.5" width="8" height="8" fill="#fff" stroke="#808080"/><path d="M582 556 L587 561 M587 556 L582 561" stroke="#000" stroke-width="1.2"/>
</svg>
</body></html>
